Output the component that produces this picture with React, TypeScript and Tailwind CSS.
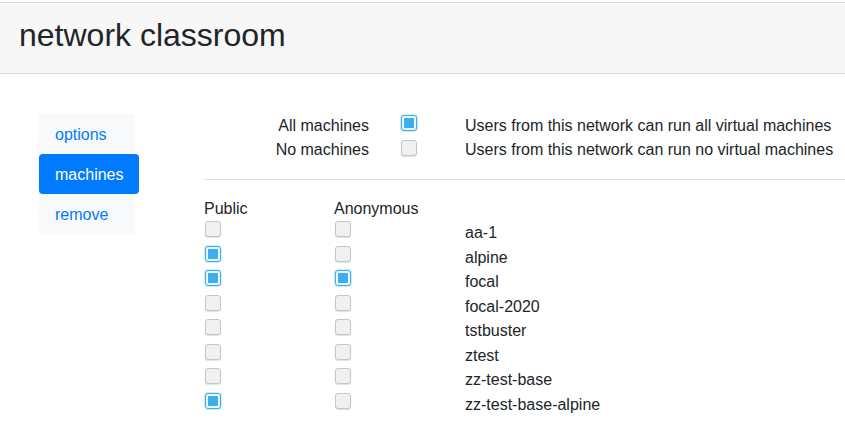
import React from "react";

function Box({ checked }: { checked: boolean }) {
  return checked ? (
    <span className="box-border flex h-[16px] w-[16px] items-center justify-center rounded-[3px] border border-[#3daee9] bg-[#eaf5fc] shadow-[0_0_0_1px_rgba(61,174,233,0.25)]">
      <span className="block h-[10px] w-[10px] rounded-[1px] bg-[#3daee9]" />
    </span>
  ) : (
    <span className="box-border block h-[16px] w-[16px] rounded-[3px] border border-[#c3c5c7] bg-[#eff0f1] shadow-[0_1px_1px_rgba(0,0,0,0.12)]" />
  );
}

const machines: [string, boolean, boolean][] = [
  ["aa-1", false, false],
  ["alpine", true, false],
  ["focal", true, true],
  ["focal-2020", false, false],
  ["tstbuster", false, false],
  ["ztest", false, false],
  ["zz-test-base", false, false],
  ["zz-test-base-alpine", true, false],
];

export default function App() {
  return (
    <div
      className="h-[443px] w-[845px] overflow-hidden bg-white text-[16px] text-[#212529]"
      style={{ fontFamily: '"Liberation Sans", Arial, sans-serif' }}
    >
      <div className="mt-[2px] border-y border-[#d9d9d9] bg-[#f7f7f7] pb-[19px] pl-[19px] pt-[13px]">
        <h1 className="text-[32px] font-normal leading-[38px]">network classroom</h1>
      </div>

      <div className="flex pt-[40px]">
        <div className="ml-[39px] w-[95px] self-start bg-[#f8f9fa]">
          <div className="h-[40px] pl-[16px] pt-[1px] leading-[40px] text-[#007bff]">options</div>
          <div className="h-[40px] w-[100px] rounded-[4px] bg-[#007bff] pl-[16px] pt-[1px] leading-[40px] text-white">
            machines
          </div>
          <div className="h-[40px] pl-[16px] pt-[1px] leading-[40px] text-[#007bff]">remove</div>
        </div>

        <div className="ml-[70px] flex-1">
          <div className="grid grid-cols-[165px_96px_1fr] leading-[24px]">
            <div className="text-right">All machines</div>
            <div className="pl-[32px] pt-[1px]">
              <Box checked={true} />
            </div>
            <div className="whitespace-nowrap">Users from this network can run all virtual machines</div>
            <div className="text-right">No machines</div>
            <div className="pl-[32px] pt-[2px]">
              <Box checked={false} />
            </div>
            <div className="whitespace-nowrap">Users from this network can run no virtual machines</div>
          </div>

          <div className="mt-[17px] border-t border-[#dee2e6]" />

          <div className="mt-[17px] grid h-[23px] grid-cols-[130px_131px_1fr] leading-[24px]">
            <div>Public</div>
            <div>Anonymous</div>
            <div />
          </div>
          {machines.map(([name, pub, anon]) => (
            <div
              key={name}
              className="grid h-[24.5px] grid-cols-[130px_131px_1fr] leading-[24px]"
            >
              <div className="pl-[1px] pt-[1px]">
                <Box checked={pub} />
              </div>
              <div className="pl-[1px] pt-[1px]">
                <Box checked={anon} />
              </div>
              <div className="pt-[1px]">{name}</div>
            </div>
          ))}
        </div>
      </div>
    </div>
  );
}
